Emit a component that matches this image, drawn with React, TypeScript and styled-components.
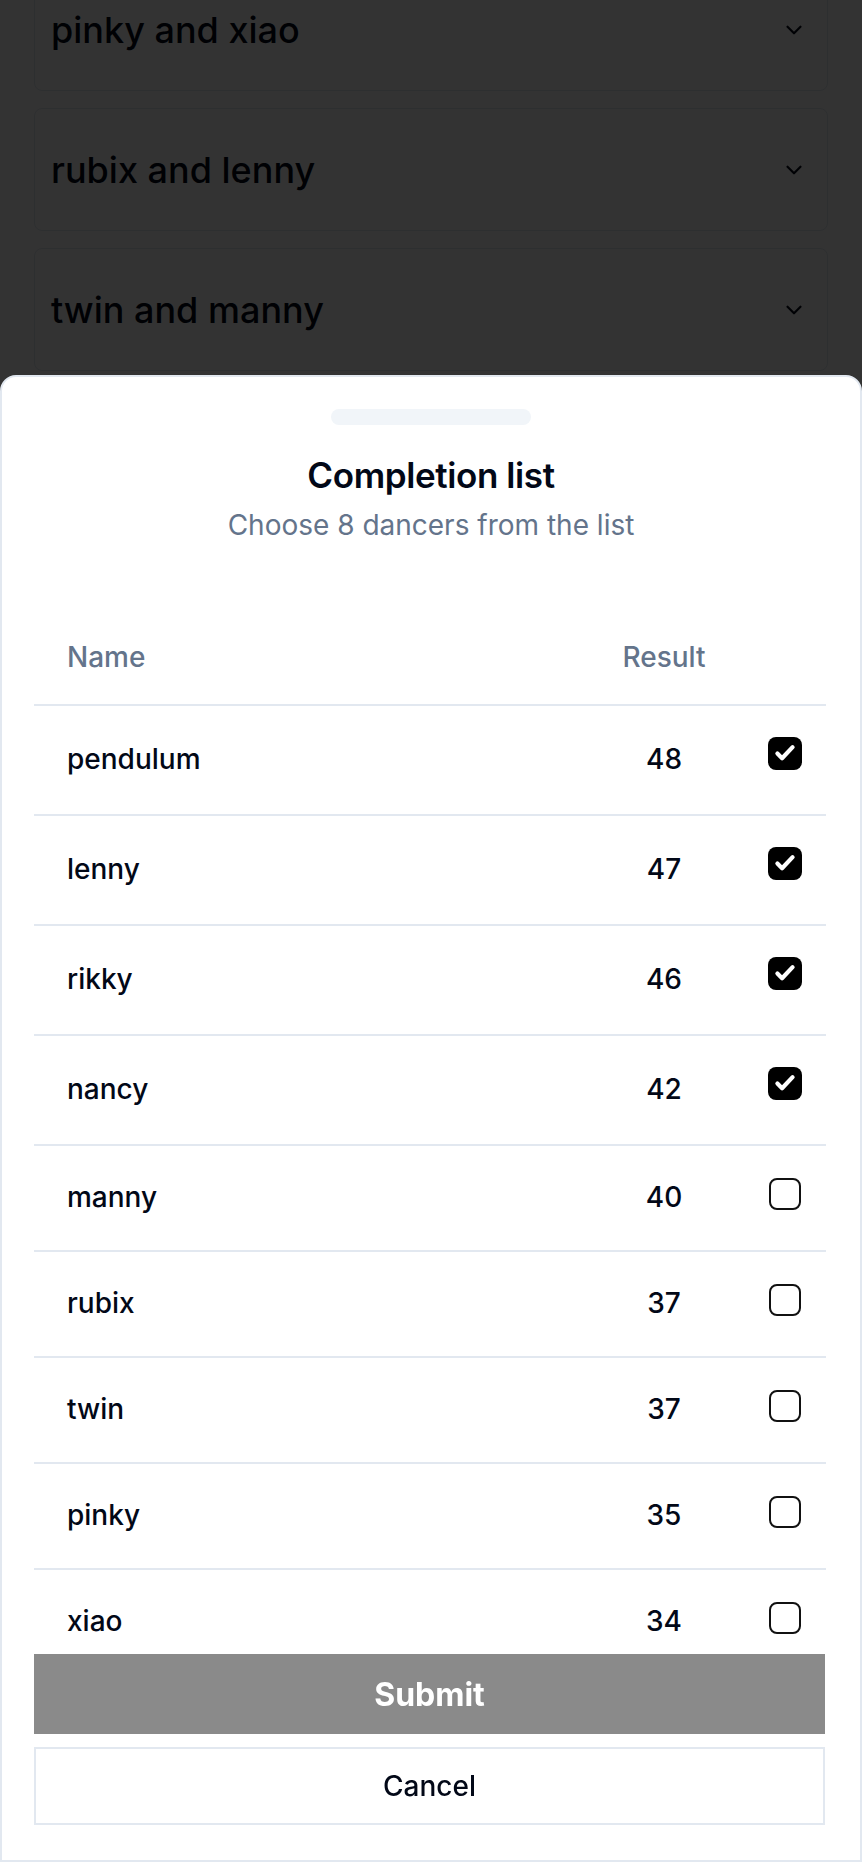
import React from "react";
import styled, { createGlobalStyle } from "styled-components";
import { ChevronDown } from "lucide-react";

const GlobalStyle = createGlobalStyle`
	body {
		margin: 0;
		background: #ffffff;
		font-family: Inter, "Noto Sans", sans-serif;
		color: #020817;
	}
	* { box-sizing: border-box; }
`;

const Page = styled.div`
	padding: 0 34px;
	overflow: hidden;
	height: 100vh;
`;

const PairList = styled.div`
	display: flex;
	flex-direction: column;
	gap: 17px;
	margin-top: -32px;
`;

const PairCard = styled.div`
	height: 123px;
	border: 1px solid #e2e8f0;
	border-radius: 8px;
	display: flex;
	align-items: center;
	justify-content: space-between;
	padding: 0 20px 0 16px;
	font-size: 36px;
	font-weight: 500;
	color: #020817;
`;

const Overlay = styled.div`
	position: fixed;
	inset: 0;
	background: rgba(0, 0, 0, 0.8);
`;

const Sheet = styled.div`
	position: fixed;
	top: 375px;
	left: 0;
	right: 0;
	bottom: 0;
	background: #ffffff;
	border: 2px solid #e2e8f0;
	border-radius: 16px 16px 0 0;
	display: flex;
	flex-direction: column;
`;

const Handle = styled.div`
	margin: 32px auto 0;
	width: 200px;
	height: 16px;
	border-radius: 999px;
	background: #f1f5f9;
	flex-shrink: 0;
`;

const SheetHeader = styled.div`
	padding: 30px 32px 67px;
	text-align: center;
	display: flex;
	flex-direction: column;
	gap: 12px;
`;

const Title = styled.h2`
	margin: 0;
	font-size: 35px;
	line-height: 40px;
	font-weight: 600;
	letter-spacing: -0.4px;
	color: #020817;
`;

const Subtitle = styled.p`
	margin: 0;
	font-size: 28px;
	line-height: 36px;
	color: #64748b;
`;

const ScrollArea = styled.div`
	flex: 1;
	overflow: hidden;
	padding: 0 34px 0 32px;
`;

const Row = styled.div<{ $height: number }>`
	display: grid;
	grid-template-columns: 1fr 160px 82px;
	align-items: center;
	height: ${(p) => p.$height}px;
	border-bottom: 2px solid #e2e8f0;
`;

const HeadCell = styled.div<{ $align?: string }>`
	font-size: 28px;
	font-weight: 500;
	color: #64748b;
	text-align: ${(p) => p.$align || "left"};
	padding-left: ${(p) => (p.$align === "center" ? 0 : 33)}px;
`;

const NameCell = styled.div`
	padding: 0 0 3px 33px;
	font-size: 28px;
	font-weight: 500;
	color: #020817;
`;

const ResultCell = styled.div`
	padding-bottom: 3px;
	text-align: center;
	font-size: 28px;
	font-weight: 500;
	color: #020817;
`;

const CheckCell = styled.div`
	display: flex;
	justify-content: center;
`;

const Box = styled.span<{ $checked: boolean }>`
	display: flex;
	align-items: center;
	justify-content: center;
	width: ${(p) => (p.$checked ? 34 : 32)}px;
	height: ${(p) => (p.$checked ? 33 : 32)}px;
	margin-bottom: ${(p) => (p.$checked ? 14 : 8)}px;
	border-radius: 8px;
	background: ${(p) => (p.$checked ? "#000000" : "#ffffff")};
	border: ${(p) => (p.$checked ? "none" : "2px solid #111111")};
`;

const Footer = styled.div`
	display: flex;
	flex-direction: column;
	gap: 13px;
	padding: 0 35px 35px 32px;
`;

const SubmitButton = styled.button`
	height: 80px;
	border: none;
	background: #8a8a8a;
	color: #ffffff;
	font-family: Inter, sans-serif;
	font-size: 32px;
	font-weight: 700;
	cursor: pointer;
`;

const CancelButton = styled.button`
	height: 78px;
	border: 2px solid #e2e8f0;
	background: #ffffff;
	color: #020817;
	font-family: Inter, sans-serif;
	font-size: 28px;
	font-weight: 500;
	cursor: pointer;
`;

const pairs = ["pinky and xiao", "rubix and lenny", "twin and manny"];

const dancers = [
	{ name: "pendulum", result: 48, checked: true },
	{ name: "lenny", result: 47, checked: true },
	{ name: "rikky", result: 46, checked: true },
	{ name: "nancy", result: 42, checked: true },
	{ name: "manny", result: 40, checked: false },
	{ name: "rubix", result: 37, checked: false },
	{ name: "twin", result: 37, checked: false },
	{ name: "pinky", result: 35, checked: false },
	{ name: "xiao", result: 34, checked: false },
];

function Checkbox({ checked }: { checked: boolean }) {
	return (
		<Box $checked={checked}>
			{checked && (
				<svg width="28" height="28" viewBox="0 0 24 24">
					<path d="M5.5 12.5l4 4L18.5 7" fill="none" stroke="#fff" strokeWidth="3.6" strokeLinecap="round" strokeLinejoin="round" />
				</svg>
			)}
		</Box>
	);
}

export default function App() {
	return (
		<>
			<GlobalStyle />
			<Page>
				<PairList>
					{pairs.map((p) => (
						<PairCard key={p}>
							{p}
							<ChevronDown size={26} strokeWidth={2} />
						</PairCard>
					))}
				</PairList>
			</Page>
			<Overlay />
			<Sheet>
				<Handle />
				<SheetHeader>
					<Title>Completion list</Title>
					<Subtitle>Choose 8 dancers from the list</Subtitle>
				</SheetHeader>
				<ScrollArea>
					<Row $height={96}>
						<HeadCell>Name</HeadCell>
						<HeadCell $align="center">Result</HeadCell>
						<div />
					</Row>
					{dancers.map((d) => (
						<Row key={d.name} $height={d.checked ? 110 : 106}>
							<NameCell>{d.name}</NameCell>
							<ResultCell>{d.result}</ResultCell>
							<CheckCell>
								<Checkbox checked={d.checked} />
							</CheckCell>
						</Row>
					))}
				</ScrollArea>
				<Footer>
					<SubmitButton>Submit</SubmitButton>
					<CancelButton>Cancel</CancelButton>
				</Footer>
			</Sheet>
		</>
	);
}
